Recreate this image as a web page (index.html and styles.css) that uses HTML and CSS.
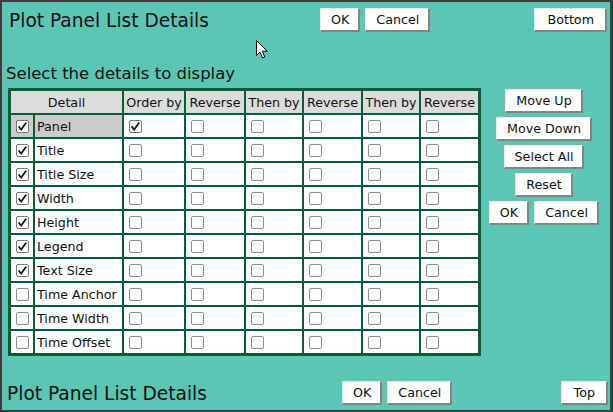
FILE: index.html
```html
<!DOCTYPE html>
<html>
<head>
<meta charset="utf-8">
<link rel="stylesheet" href="styles.css">
</head>
<body>
<div class="window">
  <div class="bar bar-top">
    <div class="title title-top">Plot Panel List Details</div>
    <div class="btn-group">
      <button class="btn">OK</button>
      <button class="btn">Cancel</button>
    </div>
    <div class="bar-right"><button class="btn">Bottom</button></div>
  </div>

  <div class="subtitle">Select the details to display</div>

  <div class="main">
    <table class="grid">
      <colgroup>
        <col class="c-chk"><col class="c-name"><col class="c-60"><col class="c-58"><col class="c-56"><col class="c-57"><col class="c-56"><col class="c-57">
      </colgroup>
      <thead>
        <tr>
          <th colspan="2">Detail</th><th>Order by</th><th>Reverse</th><th>Then by</th><th>Reverse</th><th>Then by</th><th>Reverse</th>
        </tr>
      </thead>
      <tbody>
        <tr class="sel">
          <td class="chk"><span class="cb on"><svg viewBox="0 0 13 13"><path d="M2.6 6.4 L5.2 9.6 L10.2 2.6"/></svg></span></td><td class="name">Panel</td>
          <td><span class="cb on"><svg viewBox="0 0 13 13"><path d="M2.6 6.4 L5.2 9.6 L10.2 2.6"/></svg></span></td><td><span class="cb"></span></td><td><span class="cb"></span></td><td><span class="cb"></span></td><td><span class="cb"></span></td><td><span class="cb"></span></td>
        </tr>
        <tr>
          <td class="chk"><span class="cb on"><svg viewBox="0 0 13 13"><path d="M2.6 6.4 L5.2 9.6 L10.2 2.6"/></svg></span></td><td class="name">Title</td>
          <td><span class="cb"></span></td><td><span class="cb"></span></td><td><span class="cb"></span></td><td><span class="cb"></span></td><td><span class="cb"></span></td><td><span class="cb"></span></td>
        </tr>
        <tr>
          <td class="chk"><span class="cb on"><svg viewBox="0 0 13 13"><path d="M2.6 6.4 L5.2 9.6 L10.2 2.6"/></svg></span></td><td class="name">Title Size</td>
          <td><span class="cb"></span></td><td><span class="cb"></span></td><td><span class="cb"></span></td><td><span class="cb"></span></td><td><span class="cb"></span></td><td><span class="cb"></span></td>
        </tr>
        <tr>
          <td class="chk"><span class="cb on"><svg viewBox="0 0 13 13"><path d="M2.6 6.4 L5.2 9.6 L10.2 2.6"/></svg></span></td><td class="name">Width</td>
          <td><span class="cb"></span></td><td><span class="cb"></span></td><td><span class="cb"></span></td><td><span class="cb"></span></td><td><span class="cb"></span></td><td><span class="cb"></span></td>
        </tr>
        <tr>
          <td class="chk"><span class="cb on"><svg viewBox="0 0 13 13"><path d="M2.6 6.4 L5.2 9.6 L10.2 2.6"/></svg></span></td><td class="name">Height</td>
          <td><span class="cb"></span></td><td><span class="cb"></span></td><td><span class="cb"></span></td><td><span class="cb"></span></td><td><span class="cb"></span></td><td><span class="cb"></span></td>
        </tr>
        <tr>
          <td class="chk"><span class="cb on"><svg viewBox="0 0 13 13"><path d="M2.6 6.4 L5.2 9.6 L10.2 2.6"/></svg></span></td><td class="name">Legend</td>
          <td><span class="cb"></span></td><td><span class="cb"></span></td><td><span class="cb"></span></td><td><span class="cb"></span></td><td><span class="cb"></span></td><td><span class="cb"></span></td>
        </tr>
        <tr>
          <td class="chk"><span class="cb on"><svg viewBox="0 0 13 13"><path d="M2.6 6.4 L5.2 9.6 L10.2 2.6"/></svg></span></td><td class="name">Text Size</td>
          <td><span class="cb"></span></td><td><span class="cb"></span></td><td><span class="cb"></span></td><td><span class="cb"></span></td><td><span class="cb"></span></td><td><span class="cb"></span></td>
        </tr>
        <tr>
          <td class="chk"><span class="cb"></span></td><td class="name">Time Anchor</td>
          <td><span class="cb"></span></td><td><span class="cb"></span></td><td><span class="cb"></span></td><td><span class="cb"></span></td><td><span class="cb"></span></td><td><span class="cb"></span></td>
        </tr>
        <tr>
          <td class="chk"><span class="cb"></span></td><td class="name">Time Width</td>
          <td><span class="cb"></span></td><td><span class="cb"></span></td><td><span class="cb"></span></td><td><span class="cb"></span></td><td><span class="cb"></span></td><td><span class="cb"></span></td>
        </tr>
        <tr>
          <td class="chk"><span class="cb"></span></td><td class="name">Time Offset</td>
          <td><span class="cb"></span></td><td><span class="cb"></span></td><td><span class="cb"></span></td><td><span class="cb"></span></td><td><span class="cb"></span></td><td><span class="cb"></span></td>
        </tr>
      </tbody>
    </table>

    <div class="side">
      <button class="btn">Move Up</button>
      <button class="btn">Move Down</button>
      <button class="btn">Select All</button>
      <button class="btn">Reset</button>
      <div class="btn-group">
        <button class="btn">OK</button>
        <button class="btn">Cancel</button>
      </div>
    </div>
  </div>

  <div class="bar bar-bottom">
    <div class="title title-bottom">Plot Panel List Details</div>
    <div class="btn-group">
      <button class="btn">OK</button>
      <button class="btn">Cancel</button>
    </div>
    <div class="bar-right"><button class="btn">Top</button></div>
  </div>

  <svg class="cursor" width="13" height="20" viewBox="0 0 13 20"><path d="M0.5 0.5 L0.5 15.5 L4 12 L6.6 18 L8.8 17 L6.3 11.2 L11.2 11.2 Z"/></svg>
</div>
</body>
</html>
```

FILE: styles.css
```css
* { box-sizing: border-box; }

html, body {
  margin: 0;
  padding: 0;
  background: #5cc6b4;
}

body {
  font-family: "DejaVu Sans", "Liberation Sans", sans-serif;
  color: #111;
}

.window {
  position: relative;
  width: 613px;
  height: 412px;
  border: 2px solid #3d3d3d;
  border-right-width: 3px;
  background: #5cc6b4;
  display: flex;
  flex-direction: column;
}

.bar {
  display: flex;
  align-items: center;
  height: 24px;
}

.bar-top {
  margin-top: 6px;
  padding-left: 7px;
  padding-right: 3px;
}

.bar-bottom {
  margin-top: 25px;
  padding-left: 5px;
  padding-right: 2px;
}

.title {
  font-size: 18.6px;
  line-height: 22px;
  white-space: nowrap;
  padding-top: 2px;
}

.title-top { flex: 0 0 311px; }
.title-bottom { flex: 0 0 335px; }

.bar-right {
  flex: 1;
  display: flex;
  justify-content: flex-end;
}

.btn-group {
  display: flex;
  gap: 5px;
}

.btn {
  font-family: "DejaVu Sans", "Liberation Sans", sans-serif;
  font-size: 12.7px;
  color: #111;
  height: 24px;
  line-height: 20px;
  padding: 0 9px 0 10px;
  margin: 0;
  background: #ffffff;
  border-style: solid;
  border-width: 1px 2px 2px 1px;
  border-color: #ececec #858585 #858585 #ececec;
  border-radius: 0;
  white-space: nowrap;
}

.bar-right .btn {
  padding: 0 11px 0 12px;
}

.subtitle {
  margin-top: 32px;
  padding-left: 4px;
  font-size: 16.5px;
  line-height: 19px;
  white-space: nowrap;
}

.main {
  margin-top: 5px;
  display: flex;
  align-items: flex-start;
  padding-left: 6px;
}

.grid {
  table-layout: fixed;
  width: 473px;
  border-collapse: separate;
  border-spacing: 2px;
  background: #0b5d39;
  border: 1px solid #0b5d39;
  font-size: 12.7px;
}

.c-chk { width: 22px; }
.c-name { width: 87px; }
.c-60 { width: 60px; }
.c-58 { width: 58px; }
.c-56 { width: 56px; }
.c-57 { width: 57px; }

.grid th,
.grid td {
  height: 22px;
  padding: 0;
  background: #ffffff;
  vertical-align: middle;
  white-space: nowrap;
  overflow: hidden;
}

.grid th {
  background: #dcdcdc;
  font-weight: normal;
  text-align: center;
}

.grid td {
  text-align: left;
  line-height: 13px;
}

.grid td.chk { text-align: center; }

.grid td.name { padding-left: 2px; }

.grid tr.sel td.chk,
.grid tr.sel td.name { background: #cccccc; }

.cb {
  display: inline-block;
  width: 13px;
  height: 13px;
  border: 1px solid #8e8e8e;
  border-radius: 2px;
  background: #ffffff;
  vertical-align: middle;
  margin-left: 5px;
  position: relative;
}

.chk .cb { margin-left: 0; }

.cb.on { border-color: #777; }

.cb svg {
  position: absolute;
  left: -1px;
  top: -1px;
  width: 13px;
  height: 13px;
}

.cb svg path {
  fill: none;
  stroke: #111;
  stroke-width: 1.7;
}

.side {
  flex: 1;
  display: flex;
  flex-direction: column;
  align-items: center;
  gap: 4px;
  margin-top: 1px;
  padding-right: 3px;
}

.cursor {
  position: absolute;
  left: 254px;
  top: 38px;
}

.cursor path {
  fill: #ffffff;
  stroke: #000;
  stroke-width: 1;
}
```
